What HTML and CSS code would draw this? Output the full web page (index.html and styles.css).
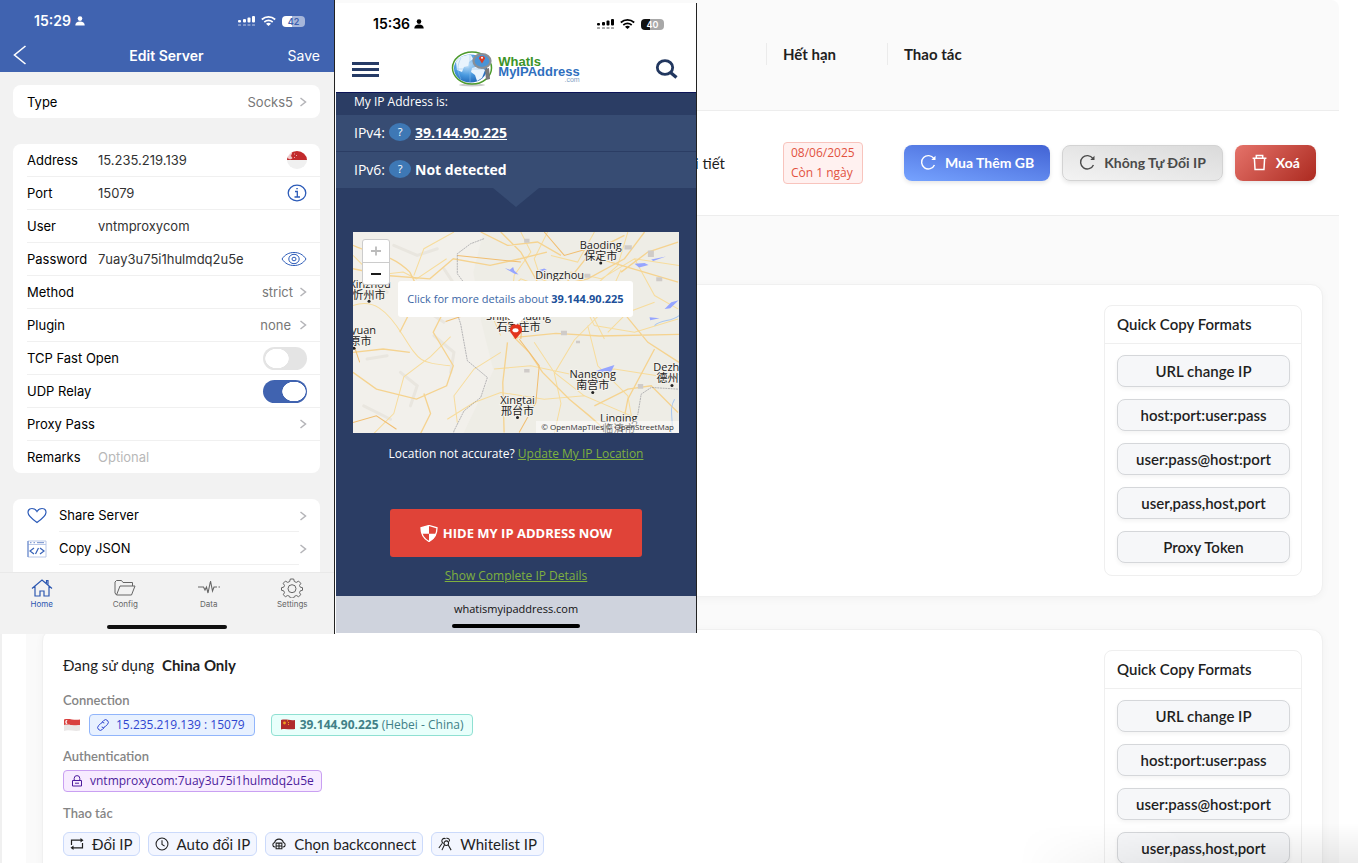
FILE: index.html
```
<!DOCTYPE html>
<html lang="vi">
<head>
<meta charset="utf-8">
<title>Proxy manager</title>
<link rel="stylesheet" href="styles.css">
</head>
<body>
<svg class="defs" aria-hidden="true">
  <symbol id="chev" viewBox="0 0 8 10"><path d="M1.5 1l5 4-5 4" fill="none" stroke="#b4b4b8" stroke-width="1.5"/></symbol>
  <symbol id="person" viewBox="0 0 10 10"><circle cx="5" cy="2.6" r="2.3"/><path d="M.3 9.4c0-2.7 1.8-4 4.7-4s4.7 1.3 4.7 4z"/></symbol>
  <symbol id="signal" viewBox="0 0 18 11"><rect x="0" y="4" width="3" height="2.5" rx="1"/><rect x="5" y="3" width="3" height="3.5" rx="1"/><rect x="9.500" y="1.500" width="3" height="5" rx="1"/><rect x="14" y="0" width="3" height="6.500" rx="1"/><g opacity=".35"><rect x="0" y="8" width="3" height="2" rx=".5"/><rect x="5" y="8" width="3" height="2" rx=".5"/><rect x="9.500" y="8" width="3" height="2" rx=".5"/><rect x="14" y="8" width="3" height="2" rx=".5"/></g></symbol>
  <symbol id="wifi" viewBox="0 0 15 10"><g fill="none" stroke="currentColor" stroke-width="1.700"><path d="M.8 3.500c4-3.400 9.400-3.400 13.400 0M3.300 6c2.600-2 5.800-2 8.400 0"/></g><path d="M5 7.700c1.600-1.200 3.400-1.200 5 0L7.500 10z"/></symbol>
  <symbol id="reload" viewBox="0 0 16 16"><path d="M13.600 10.300A6.300 6.300 0 1 1 13 4.200" fill="none" stroke="currentColor" stroke-width="1.300"/><path d="M14.600 1.600v4h-4z" fill="currentColor"/></symbol>
  <symbol id="trash" viewBox="0 0 16 16"><path d="M1.500 4h13M5 4V1.500h6V4M3.200 4.300l.6 10.200h8.400l.6-10.200" fill="none" stroke="currentColor" stroke-width="1.400"/></symbol>
  <symbol id="link" viewBox="0 0 12 12"><g fill="none" stroke="currentColor" stroke-width="1"><path d="M5 3.200l1.700-1.700a2.650 2.650 0 0 1 3.800 3.800L8 7.800a2.500 2.500 0 0 1-3.300.2"/><path d="M7 8.800l-1.700 1.700a2.650 2.650 0 0 1-3.800-3.800L4 4.200A2.500 2.500 0 0 1 7.300 4"/></g></symbol>
  <symbol id="lock" viewBox="0 0 12 12"><path d="M1.500 5.500h9v5.500h-9zM3.200 5.500V3.400a2.800 2.800 0 0 1 5.600 0v2.100M4 8.200h4" fill="none" stroke="currentColor"/></symbol>
  <symbol id="swap" viewBox="0 0 14 14"><path d="M1.500 8V3.200h9.700M12.500 6v4.800H2.800" fill="none" stroke="currentColor" stroke-width="1.200"/><path d="M10.500 1l3 2.200-3 2.200zM3.500 8.600l-3 2.200 3 2.200z"/></symbol>
  <symbol id="clock" viewBox="0 0 16 16"><path d="M8 1.200a6.800 6.800 0 1 1 0 13.600A6.800 6.800 0 0 1 8 1.200zM8 3.800v4.600l3 2" fill="none" stroke="currentColor" stroke-width="1.200"/></symbol>
  <symbol id="cloud" viewBox="0 0 16 16"><g fill="none" stroke="currentColor" stroke-width="1.200"><path d="M4 11.500H3.300A2.700 2.700 0 0 1 3 6.200a5.200 5.200 0 0 1 10 0 2.700 2.700 0 0 1-.3 5.300H12"/><path d="M4.700 7h6.600v6.500H4.700zM4.700 10.200h6.600M8 7v6.500"/></g></symbol>
  <symbol id="team" viewBox="0 0 16 16"><g fill="none" stroke="currentColor" stroke-width="1.200"><circle cx="9.500" cy="7" r="2.600"/><path d="M4.500 15l2.800-5.800M15 15l-3.300-5.800M6.500 7.500A3.200 3.200 0 0 1 5 2.600 3 3 0 0 1 8.700 2M1 12.500l3.600-5M9.500 1.500c2.400-.4 4 1.200 3.600 3.500"/></g></symbol>
</svg>

<main class="page">
  <table class="orders">
    <colgroup><col class="c-detail"><col class="c-expiry"><col class="c-actions"></colgroup>
    <thead>
      <tr><th></th><th><span>Hết hạn</span></th><th><span>Thao tác</span></th></tr>
    </thead>
    <tbody>
      <tr>
        <td class="detail">Chi tiết</td>
        <td><div class="expiry">08/06/2025<br>Còn 1 ngày</div></td>
        <td><div class="actions">
          <button class="btn buy"><svg><use href="#reload"/></svg>Mua Thêm GB</button>
          <button class="btn rotate"><svg><use href="#reload"/></svg>Không Tự Đổi IP</button>
          <button class="btn delete"><svg><use href="#trash"/></svg>Xoá</button>
        </div></td>
      </tr>
    </tbody>
  </table>

  <div class="expanded">
    <section class="card">
      <div class="info"></div>
      <aside class="formats">
        <h3>Quick Copy Formats</h3>
        <div class="format-list">
          <button>URL change IP</button>
          <button>host:port:user:pass</button>
          <button>user:pass@host:port</button>
          <button>user,pass,host,port</button>
          <button>Proxy Token</button>
        </div>
      </aside>
    </section>
    <section class="card">
      <div class="info">
        <p class="using">Đang sử dụng <strong>China Only</strong></p>
        <h4>Connection</h4>
        <div class="tags">
          <svg class="flag sg" viewBox="0 0 18 14"><path d="M1 1.500c5-1.500 10 1.200 16 0v5.600c-6 1.300-11-1.300-16 0z" fill="#d9413f"/><path d="M1 7.100c5-1.300 10 1.300 16 0v5.400c-6 1.300-11-1.300-16 .4z" fill="#e9e6e6"/><path d="M4.600 2.200a1.900 1.900 0 1 0 0 3.700 2.200 2.200 0 0 1 0-3.700z" fill="#fff"/></svg>
          <span class="tag blue"><svg><use href="#link"/></svg>15.235.219.139 : 15079</span>
          <span class="tag teal"><svg class="cn" viewBox="0 0 14 11"><path d="M0 1c5-1.500 9 1 14 0v9c-5 1.200-9-1-14 .4z" fill="#b02a2c"/><circle cx="3.500" cy="4" r="1.400" fill="#f0a020"/><path d="M6 1.800h1M7 3.500h1M7 5.500h1" stroke="#f0a020"/></svg><span><b>39.144.90.225</b> (Hebei - China)</span></span>
        </div>
        <h4>Authentication</h4>
        <div class="tags"><span class="tag purple"><svg><use href="#lock"/></svg>vntmproxycom:7uay3u75i1hulmdq2u5e</span></div>
        <h4 class="ops-title">Thao tác</h4>
        <div class="ops">
          <button><svg><use href="#swap"/></svg>Đổi IP</button>
          <button><svg><use href="#clock"/></svg>Auto đổi IP</button>
          <button><svg><use href="#cloud"/></svg>Chọn backconnect</button>
          <button><svg><use href="#team"/></svg>Whitelist IP</button>
        </div>
      </div>
      <aside class="formats">
        <h3>Quick Copy Formats</h3>
        <div class="format-list">
          <button>URL change IP</button>
          <button>host:port:user:pass</button>
          <button>user:pass@host:port</button>
          <button>user,pass,host,port</button>
        </div>
      </aside>
    </section>
  </div>
  <div class="fade"></div>
</main>

<section class="phone server">
  <header class="bluebar">
    <div class="status"><span class="time">15:29</span><svg class="i-person"><use href="#person"/></svg><svg class="i-signal"><use href="#signal"/></svg><svg class="i-wifi"><use href="#wifi"/></svg><span class="battery">42</span></div>
    <div class="nav"><button aria-label="Back"><svg class="i-back" viewBox="0 0 14 20"><path d="M12.500 1L1.500 10l11 9" fill="none" stroke="#fff" stroke-width="1.600"/></svg></button><h1>Edit Server</h1><button>Save</button></div>
  </header>
  <div class="sheet">
    <div class="group">
      <div class="row"><span class="label">Type</span><span class="value">Socks5</span><svg class="i-chev"><use href="#chev"/></svg></div>
    </div>
    <div class="group">
      <div class="row"><label class="label" for="f-addr">Address</label><input id="f-addr" value="15.235.219.139"><svg class="i-sg" viewBox="0 0 20 18"><path d="M0 9a10 9 0 0 1 20 0z" fill="#c22a2c"/><path d="M0 9a10 9 0 0 0 20 0z" fill="#f0f0f0"/><path d="M5 2.500a3 3 0 1 0 .2 4.500A2.500 2.500 0 0 1 5 2.500zM7 3h1M9 4.500h1M7 6.500h1" fill="#fff" stroke="#fff" stroke-width=".8" opacity=".75"/></svg></div>
      <div class="row"><label class="label" for="f-port">Port</label><input id="f-port" value="15079"><svg class="i-info" viewBox="0 0 20 18"><g fill="none" stroke="#2c5bb8" stroke-width="1.300"><ellipse cx="10" cy="9" rx="8.800" ry="7.800"/><path d="M8 7.500h2.300V13M7.500 13h5.500M9.300 4.700h1.500"/></g></svg></div>
      <div class="row"><label class="label" for="f-user">User</label><input id="f-user" value="vntmproxycom"></div>
      <div class="row"><label class="label" for="f-pass">Password</label><input id="f-pass" value="7uay3u75i1hulmdq2u5e"><svg class="i-eye" viewBox="0 0 26 16"><g fill="none" stroke="#2c5bb8"><path d="M1 8c3-4.500 7-6.500 12-6.500S22 3.500 25 8c-3 4.500-7 6.500-12 6.500S4 12.500 1 8z"/><ellipse cx="13" cy="8" rx="5.200" ry="4.700"/><ellipse cx="13" cy="8" rx="2" ry="1.800"/></g></svg></div>
      <div class="row"><span class="label">Method</span><span class="value">strict</span><svg class="i-chev"><use href="#chev"/></svg></div>
      <div class="row"><span class="label">Plugin</span><span class="value wide">none</span><svg class="i-chev"><use href="#chev"/></svg></div>
      <div class="row"><label class="label" for="tfo">TCP Fast Open</label><input class="switch" type="checkbox" id="tfo"></div>
      <div class="row"><label class="label" for="udp">UDP Relay</label><input class="switch" type="checkbox" id="udp" checked></div>
      <div class="row"><span class="label">Proxy Pass</span><svg class="i-chev"><use href="#chev"/></svg></div>
      <div class="row"><label class="label" for="f-rem">Remarks</label><input id="f-rem" placeholder="Optional"></div>
    </div>
    <div class="group links">
      <div class="row"><svg class="i-lead" viewBox="0 0 20 18"><path d="M10 15.500C5 12 1 9 1 5.600 1 3 2.800 1.500 5 1.500c2.300 0 4 1.200 5 3 1-1.800 2.700-3 5-3 2.200 0 4 1.500 4 4.100C19 9 15 12 10 15.500z" fill="none" stroke="#2c5bb8" stroke-width="1.200"/></svg><span class="label">Share Server</span><svg class="i-chev"><use href="#chev"/></svg></div>
      <div class="row"><svg class="i-lead" viewBox="0 0 20 18"><path d="M1 1h18v16H1zM1 4.500h18" fill="none" stroke="#b9c8e8"/><path d="M1 1v16" stroke="#5b7fc7"/><path d="M3 2.700h1.500m2 0H8m2 0h7" stroke="#6c8bcb"/><path d="M7 8l-4 3 4 3M13 8l4 3-4 3M11.500 8l-3 6" fill="none" stroke="#3763b8" stroke-width="1.200"/></svg><span class="label">Copy JSON</span><svg class="i-chev"><use href="#chev"/></svg></div>
      <div class="row"><svg class="i-lead" viewBox="0 0 20 18"><path d="M6 7h10v9H6z" fill="#c9d5ee"/></svg></div>
    </div>
  </div>
  <nav class="tabs">
    <a href="#" class="on"><svg viewBox="0 0 22 20"><path d="M1 10.500L11 2l10 8.500M4 8.500V18h5v-5h4v5h5V8.500M15.500 5V2.500h1.500v4" fill="none" stroke="currentColor" stroke-width="1.200"/></svg>Home</a>
    <a href="#"><svg viewBox="0 0 22 20"><path d="M2.500 17L1 15V4l1.500-1.500h5L9 4.500h9.500V8M2.500 17L6 8h15l-3.500 9z" fill="none" stroke="currentColor"/></svg>Config</a>
    <a href="#"><svg viewBox="0 0 22 20"><path d="M0 9h5.500l1.500 3 1.500-3L10 15l2.500-12 2 10 1.500-4h3m1.500 0H22" fill="none" stroke="currentColor" stroke-width="1.100"/></svg>Data</a>
    <a href="#"><svg viewBox="0 0 22 20"><g fill="none" stroke="currentColor"><path d="M9.300 1h3.400l.6 2.500 2 .9 2.300-1.300 2.200 2.200L18.500 7.500l.8 1.700 2.200.5v2.600l-2.200.5-.8 1.900 1.300 2-2.200 2-2.300-1.200-2 .9-.6 1.600H9.300l-.6-1.600-2-.9-2.300 1.200-2.200-2 1.300-2-.8-1.900-2.200-.5V9.700l2.200-.5.800-1.700-1.300-2.200 2.200-2.200 2.300 1.300 2-.9z"/><circle cx="11" cy="10.700" r="4"/></g></svg>Settings</a>
  </nav>
  <div class="homebar"></div>
</section>

<section class="phone browser">
  <header class="whitebar">
    <div class="status"><span class="time">15:36</span><svg class="i-person"><use href="#person"/></svg><svg class="i-signal"><use href="#signal"/></svg><svg class="i-wifi"><use href="#wifi"/></svg><span class="battery">40</span></div>
    <div class="brandbar">
      <button class="menu" aria-label="Menu"><i></i><i></i><i></i></button>
      <a class="brand" href="#"><svg class="globe" viewBox="0 0 42 36"><defs><radialGradient id="sea" cx=".4" cy=".35" r=".7"><stop offset="0" stop-color="#cfe8fb"/><stop offset=".55" stop-color="#4b9be0"/><stop offset="1" stop-color="#1d63b4"/></radialGradient></defs><ellipse cx="21" cy="34" rx="13" ry="1.500" fill="#ccc"/><ellipse cx="21" cy="17" rx="19.500" ry="16" fill="#fff" stroke="#4c9a2c" stroke-width="1.500"/><ellipse cx="19.500" cy="17.500" rx="16.500" ry="14" fill="url(#sea)"/><path d="M5 11C8 6 14 3.500 20 4l2 4-4 3-1 4-4 1-2 5-5-2zM21 17l7-2 6 4-3 8-5 3-2-6-4-3z" fill="#e9f4fd"/><path d="M4 18h31M19 4v27M10 7c-4 7-4 14 0 21" fill="none" stroke="#8cc2ee" stroke-width=".5"/><path d="M34 18l4-1 1 11-4 1z" fill="#777"/><ellipse cx="31" cy="10" rx="8.500" ry="7" fill="#4a94d6" stroke="#8a8f96" stroke-width="2.200"/><path d="M31 12.500l-3-5a3 2.500 0 1 1 6 0z" fill="#dc3b25"/><circle cx="31" cy="6.800" r="1" fill="#fff"/></svg><span class="wordmark"><span class="w1">WhatIs</span><span class="w2">MyIPAddress</span><span class="w3">.com</span></span></a>
      <button aria-label="Search"><svg class="i-search" viewBox="0 0 24 20"><ellipse cx="10" cy="8.500" rx="7.700" ry="6.900" fill="none" stroke="#22375f" stroke-width="2.800"/><path d="M15.500 13.500l6 5" stroke="#22375f" stroke-width="3.400"/></svg></button>
    </div>
  </header>
  <div class="navy">
    <p class="mine">My IP Address is:</p>
    <div class="ip">IPv4: <span class="q">?</span><a href="#">39.144.90.225</a></div>
    <div class="ip">IPv6: <span class="q">?</span><b>Not detected</b></div>
    <svg class="notch" viewBox="0 0 46 19"><path d="M0 0h46L23 19z" fill="#374c73"/></svg>
    <div class="map">
      <svg class="terrain" viewBox="0 0 325 201" preserveAspectRatio="xMinYMin slice">
        <rect width="325" height="201" fill="#eeede6"/>
        <path d="M0 0h130l-10 40 8 50 12 48-30 63H0z" fill="#f2f0eb"/>
        <g transform="scale(.3333) translate(-58 -20)" fill="none">
          <g stroke="#e9e6df" stroke-width="9" stroke-linecap="round"><path d="M180 60l70 30 60-20M100 170l60 30M200 440l50 40-20 60M300 330l60 50-10 60M90 540l80 40M330 130l40 60M270 250l60 40M100 400l60-10"/></g>
          <g stroke="#f7dc9c" stroke-width="3"><path d="M58 90l60 60 90-10 40 20 90-60M58 240c60-20 100 10 150 90s50 80 140 90M120 623l60-60 30-110 80-60 60-60M360 20l-90 50-30 80M420 180l80 40 60-60 80 30 70-50 90 20 100-60 133 20M640 20l-40 80 20 60 130 60 60 120M560 20l30 60-50 70-10 110 20 80M660 623l20-90-20-90 60-100 80-80 60-130M760 300l30 120 90 90 20 113M480 430l110-10 140 30 110-20 190 30M500 500l130 20 120-10 140 60M720 180l60 120 120 20 130-40M880 20l-30 100-90 80M900 100l60 110 70 40M820 320l60-60 80-30M600 350l60 90 90 70M340 580l80-50 80-30M370 590l-10-80 60-80 80-50M460 240l40 90M650 90l80 20 50-90"/></g>
          <g stroke="#f5d390" stroke-width="4"><path d="M58 60c60 30 110 20 170 80l30 60-60 120M58 130l100 20 130 10 70-60 110 20 90-20 80-20M500 20l60 60 50 90-60 90-10 80M545 340l40 40 40 60 80 80 60 50 60 53M520 350l-14 120 4 150M545 335l120-12 130 8 238-5M58 440l70 50 120 30 90-40 20-60-60-100 30-60 90-30 60 40 60 40M58 380l90-10 80 10M260 623l30-60-20-60M570 300l60-90 60-30 80-100 100-50M930 20l-60 80-110 60-90 20M760 90l270 80M1030 50l-90 30-80 60M440 20l80 40 90-10 70 40M850 240l90 110 93 60M960 370l-80 150-20 103M1030 560l-80-80-70 10-100 50"/></g>
          <g stroke="#f1be70" stroke-width="3"><path d="M545 338l-30-60-90-20-90 30M555 340l60 80-10 110-50 90M570 200l-10 140M58 350l20 60M370 90l190 20M58 590l70-20 60 40M630 20l60 70 70-20"/></g>
          <path d="M450 40l-40 15-40 30v60l30 40-40 50 20 60 20 110 60 50-20 60-50 40-30 60-10 48M1030 490l-80-5-30 20-10 60-20 58" stroke="#96969a" stroke-width="2" stroke-dasharray="6 2"/>
          <g fill="#96a5ff"><path d="M512 128l15 5 10-8 3 10 13 12-12-2-10-6zM610 135l20-6 8 5-20 5 8 8-14-4zM900 115l30-2 12 6-28 7zM950 102l44-9-38 14zM990 250l20-20 22-6-25 24zM945 275l30 3-28 6zM770 440l70-22-10 20z"/></g>
          <g fill="#cfcbc8"><path d="M750 145h18v12h-18zM870 60h22v12h-22zM940 75h18v20h-18zM680 315h18v14h-18zM570 430h16v10h-16zM725 345h12v8h-12zM910 475h16v14h-16zM570 40h16v12h-16zM515 210h15v12h-15zM965 155h18v12h-18z"/></g>
          <path d="M1020 520c-20 30 0 70-10 100M960 300c20-20 50-10 73-30" stroke="#a9c7ef" stroke-width="3"/>
        </g>
        <g class="place">
          <text x="247" y="17">Baoding</text><text x="247" y="28">保定市</text><text x="206" y="47">Dingzhou</text>
          <text x="17" y="56">Xinzhou</text><text x="16" y="67">忻州市</text><text x="165" y="88">Shijiazhuang</text><text x="165" y="99">石家庄市</text>
          <text x="3" y="102">Taiyuan</text><text x="2" y="113">太原市</text><text x="239" y="146">Nangong</text><text x="239" y="157">南宫市</text>
          <text x="164" y="171">Xingtai</text><text x="164" y="182">邢台市</text><text x="319" y="139">Dezhou</text><text x="319" y="150">德州市</text><text x="265" y="189">Linqing</text><text x="265" y="200">临清市</text>
        </g>
        <g fill="#222"><circle cx="247" cy="31" r="1.500"/><circle cx="16" cy="69" r="1.500"/><circle cx="239" cy="160" r="1.500"/><circle cx="164" cy="185" r="1.500"/><circle cx="318" cy="153" r="1.500"/><circle cx="1" cy="116" r="1.500"/></g>
        <path d="M162 107l-5-7a6 6 0 1 1 11 0z" fill="#e2341d"/><ellipse cx="162" cy="98" rx="3" ry="2" fill="#fff"/>
      </svg>
      <div class="zoom"><button disabled aria-label="Zoom in"><svg viewBox="0 0 12 12"><path d="M1 6h10M6 1.500v9" stroke="#bbb" stroke-width="1.800"/></svg></button><button aria-label="Zoom out"><svg viewBox="0 0 12 12"><path d="M1 6h10" stroke="#000" stroke-width="1.800"/></svg></button></div>
      <a class="popup" href="#">Click for more details about <b>39.144.90.225</b></a>
      <span class="credit">© OpenMapTiles © OpenStreetMap</span>
    </div>
    <p class="accuracy">Location not accurate? <a href="#">Update My IP Location</a></p>
    <button class="hide"><svg viewBox="0 0 18 17"><path d="M9 .5L1 2.800C1 9 3 13.500 9 16.500c6-3 8-7.500 8-13.700z" fill="none" stroke="#fff" stroke-width="1.300"/><path d="M9 .5L1 2.800c0 2.200.2 4.200.8 6H9zM9 8.800h7.200c-1 3.400-3 6-7.200 7.700z" fill="#fff"/></svg>HIDE MY IP ADDRESS NOW</button>
    <a class="complete" href="#">Show Complete IP Details</a>
  </div>
  <footer>whatismyipaddress.com<div class="homebar"></div></footer>
</section>
</body>
</html>
```
FILE: styles.css
```
* { box-sizing: border-box; }
body { margin: 0; background: #fff; color: #1f1f1f; font-family: Lato, "Noto Sans", sans-serif; font-size: 15px; }
button, input { font: inherit; color: inherit; }
button { cursor: pointer; padding: 0; border: 0; background: none; }
h1, h3, h4, p { margin: 0; }
svg { display: block; flex: none; fill: currentColor; }
.defs { position: absolute; width: 0; height: 0; }

/* order list */
.page { position: relative; height: 100vh; overflow: hidden; padding-right: 23px; border-left: 2px solid #f0f0f0; }
.orders { width: 100%; border-collapse: collapse; table-layout: fixed; }
.c-expiry { width: 121px; }
.c-actions { width: 452px; }
.orders th { height: 110px; padding: 0 0 2px; background: #fafafa; border-bottom: 1px solid #ededed; text-align: left; font-weight: 700; }
.orders th:last-child { border-radius: 0 8px 0 0; }
.orders th span { display: block; padding-left: 16px; border-left: 1px solid #ebebeb; line-height: 22px; }
.orders td { height: 105px; padding: 0 0 0 17px; border-bottom: 1px solid #ededed; }
.orders .detail { padding-right: 41px; text-align: right; }
.expiry { width: 80px; padding: 0 7px; background: #fff1f0; border: 1px solid #f8c4bd; border-radius: 4px; color: #e2513f; font-family: "Open Sans", sans-serif; font-size: 12px; line-height: 20px; white-space: nowrap; }
.actions { display: flex; gap: 12px; }
.btn { display: flex; align-items: center; gap: 8px; height: 36px; padding: 0 16px; border-radius: 8px; font-size: 14px; font-weight: 700; white-space: nowrap; box-shadow: 0 2px 4px #0000001a; color: #fff; }
.btn svg { width: 17px; height: 17px; }
.buy { background: linear-gradient(10deg, #76a3ff, #4263d4); }
.rotate { background: linear-gradient(10deg, #f3f3f3, #dadada); border: 1px solid #d3d3d3; color: #4a4a4a; }
.delete { background: linear-gradient(135deg, #e5736a, #ac2a20); }

.expanded { display: flex; flex-direction: column; gap: 32px; margin-left: 24px; padding: 68px 16px; background: #fafafa; }
.card { display: flex; justify-content: space-between; padding: 20px; background: #fff; border: 1px solid #f0f0f0; border-radius: 12px; box-shadow: 0 2px 8px #0000000a; }
.formats { width: 198px; border: 1px solid #efefef; border-radius: 8px; }
.formats h3 { padding: 0 12px; border-bottom: 1px solid #efefef; font-size: 15px; font-weight: 600; line-height: 37px; }
.format-list { display: grid; gap: 12px; padding: 11px 11px 12px 12px; }
.format-list button { height: 32px; background: #f6f7f9; border: 1px solid #d5d7da; border-radius: 8px; font-weight: 600; box-shadow: 0 2px 4px #0000000d; }

.using { padding-top: 4px; line-height: 22px; }
.using strong { margin-left: 4px; }
.info h4 { margin-top: 11px; color: #858585; font-size: 13px; font-weight: 600; line-height: 18px; }
.info .using + h4 { margin-top: 15px; }
.info .ops-title { margin-top: 12px; }
.tags { display: flex; align-items: center; margin-top: 5px; }
.tag { display: flex; align-items: center; gap: 7px; height: 22px; padding: 0 7px; border: 1px solid; border-radius: 4px; font-family: "Open Sans", sans-serif; font-size: 12px; font-weight: 500; white-space: nowrap; }
.tag svg { width: 12px; height: 12px; }
.tag .cn { width: 14px; height: 11px; }
.flag { width: 18px; height: 14px; margin-right: 8px; }
.blue { background: #e8f1ff; border-color: #91b5fb; color: #2f45d0; margin-right: 16px; padding-right: 9px; }
.teal { gap: 5px; padding: 0 9px; background: #e8fffb; border-color: #8fe0d2; color: #418087; }
.purple { background: #f7ebff; border-color: #c9a0f2; color: #4c1c9c; }
.ops { display: flex; gap: 8px; margin-top: 10px; }
.ops button { display: flex; align-items: center; gap: 8px; height: 24px; padding: 0 6px; background: #f3f6ff; border: 1px solid #cbdafb; border-radius: 6px; white-space: nowrap; }
.ops svg { width: 14px; height: 14px; }
.fade { position: absolute; right: 4px; bottom: 0; width: 340px; height: 40px; background: linear-gradient(#0000, #00000014); -webkit-mask: linear-gradient(90deg, #0000, #000 50%); mask: linear-gradient(90deg, #0000, #000 50%); }

/* phone screens laid over the list */
.phone { position: absolute; display: flex; flex-direction: column; overflow: hidden; }
.server { left: 0; top: 0; width: 335px; height: 634px; background: #f2f2f2; border-right: 1px solid #222; color: #000; font-family: Inter, sans-serif; font-size: 13px; }
.status { display: flex; align-items: center; line-height: 18px; font-family: Inter, sans-serif; font-size: 14px; font-weight: 600; }
.i-person { width: 10px; height: 10px; margin: 0 auto 0 4px; }
.i-signal { width: 18px; height: 11px; }
.i-wifi { width: 15px; height: 10px; margin: 0 6px 0 5px; }
.battery { width: 23px; border-radius: 4px; font-size: 9px; line-height: 11px; text-align: center; }
.bluebar { height: 72px; padding: 12px 14px 0 13px; background: #4063b0; color: #fff; }
.bluebar .status { padding: 0 15px 0 21px; }
.bluebar .battery { background: linear-gradient(90deg, #fff 42%, #a6b6da 42%); color: #3d5fae; }
.nav { display: grid; grid-template-columns: 1fr auto 1fr; align-items: center; height: 40px; margin-top: 5px; }
.nav h1 { font-size: 14px; font-weight: 600; }
.nav button:last-child { justify-self: end; font-size: 14px; }
.i-back { width: 14px; height: 20px; }
.sheet { display: flex; flex-direction: column; flex: 1; gap: 26px; min-height: 0; overflow: hidden; padding: 13px 14px 0 13px; }
.group { flex: none; padding-left: 14px; background: #fff; border-radius: 8px; }
.row { display: flex; align-items: center; height: 33px; padding-right: 13px; border-bottom: 1px solid #f0f0f0; }
.row:last-child { border-bottom: 0; height: 32px; }
.row:first-child { height: 33px; }
.label { min-width: 71px; white-space: nowrap; margin-right: auto; }
.row input:not(.switch) { flex: 1; min-width: 0; padding: 0; border: 0; outline: 0; background: none; color: #333; }
.row input::placeholder { color: #b8b8b8; opacity: 1; }
.value { margin-right: 6px; color: #777; }
.value.wide { margin-right: 8px; }
.i-chev { width: 8px; height: 10px; }
.i-sg, .i-info { width: 20px; height: 18px; }
.i-eye { width: 26px; height: 16px; }
.switch { appearance: none; width: 44px; height: 23px; margin: 0; border-radius: 12px; background: radial-gradient(ellipse 12px 10px at 14px 50%, #fff 95%, #e4e4e4); }
.switch:checked { background: radial-gradient(ellipse 12px 10px at 31px 50%, #fff 95%, #4063b0); }
.links .row { border-bottom: 0; }
.links .label { align-self: stretch; flex: 1; margin-left: 12px; line-height: 32px; border-bottom: 1px solid #f0f0f0; }
.i-lead { width: 20px; height: 18px; }
.tabs { display: grid; grid-template-columns: repeat(4, 1fr); height: 48px; padding: 5px 0; border-top: 1px solid #e9e9e9; }
.tabs a { display: flex; flex-direction: column; align-items: center; gap: 1px; color: #666; font-size: 8px; line-height: 10px; text-decoration: none; }
.tabs svg { width: 22px; height: 20px; }
.tabs .on { color: #2c57b0; }
.homebar { width: 120px; height: 4px; margin: 5px auto 5px; border-radius: 2px; background: #111; }

.browser { left: 335px; top: 3px; width: 362px; height: 630px; padding-left: 1px; background: #fff; border-right: 1px solid #222; color: #fff; font-family: "Open Sans", sans-serif; font-size: 12px; }
.whitebar { height: 90px; padding: 12px 17px 0 16px; border-bottom: 1px solid #0b1457; color: #000; }
.whitebar .status { padding: 0 15px 0 21px; }
.whitebar .battery { background: linear-gradient(90deg, #111 40%, #a8a8a8 40%); color: #fff; }
.brandbar { display: flex; align-items: center; justify-content: space-between; height: 40px; margin-top: 16px; }
.menu { display: grid; gap: 3px; width: 27px; }
.menu i { height: 3px; background: #263b66; }
.brand { display: flex; gap: 5px; align-items: center; margin-right: 3px; text-decoration: none; }
.globe { width: 42px; height: 36px; }
.wordmark { display: grid; font-family: "Liberation Sans", sans-serif; font-size: 13px; font-weight: 700; line-height: 10px; }
.w1 { color: #3c9428; }
.w2 { color: #2f6fbe; }
.w3 { justify-self: end; color: #7f9fc4; font-size: 7px; font-weight: 400; line-height: 5px; }
.i-search { width: 24px; height: 20px; }
.navy { display: flex; flex: 1; flex-direction: column; align-items: center; background: #2b3d64; }
.mine { align-self: stretch; padding: 0 18px 5px; line-height: 17px; }
.ip { display: flex; align-items: center; align-self: stretch; height: 36px; padding: 0 18px 2px; background: #374c73; font-size: 14px; }
.ip + .ip { margin-top: 1px; }
.ip a, .ip b { color: #fff; font-weight: 700; }
.q { width: 22px; margin: 0 4px; border-radius: 50%; background: #3e78b5; font-size: 11px; line-height: 18px; text-align: center; }
.notch { width: 46px; height: 19px; }
.map { position: relative; width: 326px; height: 201px; margin-top: 25px; overflow: hidden; color: #333; }
.terrain { width: 100%; height: 100%; }
.place { fill: #222; stroke: #f4f2ec; stroke-width: 2px; paint-order: stroke; font-family: "Open Sans", "Noto Sans CJK SC", sans-serif; font-size: 11px; text-anchor: middle; }
.zoom { position: absolute; left: 9px; top: 7px; display: grid; width: 28px; border: 1px solid #ccc; border-radius: 3px; background: #fff; }
.zoom button { display: grid; place-items: center; height: 22px; }
.zoom button + button { border-top: 1px solid #ccc; }
.zoom svg { width: 12px; height: 12px; }
.popup { position: absolute; left: 45px; top: 49px; width: 235px; height: 36px; border-radius: 3px; background: #fff; color: #3b66a5; font-size: 11px; line-height: 36px; text-align: center; white-space: nowrap; text-decoration: none; }
.popup::after { content: ""; position: absolute; left: 109px; top: 36px; border: 9px solid #0000; border-top: 8px solid #fff; border-bottom: 0; }
.popup b { color: #20509a; }
.credit { position: absolute; right: 0; bottom: 0; padding: 0 5px; background: #ffffff80; font-size: 8px; line-height: 12px; }
.accuracy { margin-top: 12px; line-height: 18px; }
.accuracy a, .complete { color: #7fb03f; }
.hide { display: flex; align-items: center; justify-content: center; gap: 5px; width: 252px; height: 48px; margin-top: 46px; border-radius: 3px; background: #e04338; font-size: 13px; font-weight: 700; }
.hide svg { width: 18px; height: 17px; }
.complete { margin-top: 10px; line-height: 18px; }
footer { height: 37px; background: #cfd3dd; color: #111; font-size: 11px; line-height: 26px; text-align: center; }
footer .homebar { width: 128px; margin: 2px auto 0; background: #000; }
```
